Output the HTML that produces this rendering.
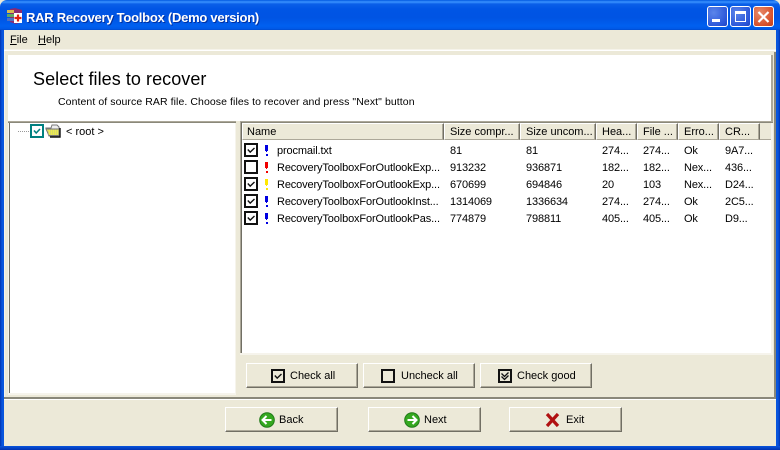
<!DOCTYPE html>
<html><head><meta charset="utf-8">
<style>
html,body{margin:0;padding:0;width:780px;height:450px;overflow:hidden;background:#ece9d8;}
*{box-sizing:border-box;}
body{font-family:"Liberation Sans",sans-serif;font-size:11px;color:#000;position:relative;}
.a{position:absolute;}
.t{position:absolute;white-space:nowrap;line-height:13px;margin-top:1px;}
.r{letter-spacing:-.13px;}
.btn{position:absolute;height:25px;width:113px;background:#ece9d8;border-top:1px solid #fff;border-left:1px solid #fff;border-right:1px solid #716f64;border-bottom:1px solid #716f64;box-shadow:inset -1px -1px 0 #aca899;}
.hd{position:absolute;top:123px;height:17px;background:#ece9d8;border-top:1px solid #fff;border-left:1px solid #fff;border-right:1px solid #716f64;border-bottom:1px solid #aca899;box-shadow:inset -1px 0 0 #aca899;line-height:16px;padding-left:5px;white-space:nowrap;overflow:hidden;}
.cb{position:absolute;left:244px;width:14px;height:14px;}
.ex{position:absolute;left:265px;width:3px;height:11px;}
</style></head>
<body>
<!-- title bar -->
<div class="a" style="left:0;top:0;width:780px;height:30px;border-radius:7px 7px 0 0;background:linear-gradient(180deg,#0058e0 0,#3a93ff 2px,#0a5fe8 4px,#0055e5 9px,#0054e3 18px,#0060f0 26px,#0058e6 29px,#0048c8 30px);"></div>
<div class="a" style="left:0;top:30px;width:4px;height:420px;background:linear-gradient(90deg,#0032b0,#0855dd 2px,#0855dd)"></div>
<div class="a" style="right:0;top:30px;width:4px;height:420px;background:linear-gradient(270deg,#0032b0,#0855dd 2px,#0855dd)"></div>
<div class="a" style="left:0;top:446px;width:780px;height:4px;background:linear-gradient(180deg,#0855dd,#0032b0)"></div>
<!-- app icon -->
<svg class="a" style="left:6px;top:7px" width="17" height="17" viewBox="0 0 17 17">
<path d="M4 2l5-1 7 2v12l-6 2-6-2z" fill="#8a2a70"/>
<rect x="1" y="3" width="7" height="3" fill="#d8b850"/>
<rect x="1" y="7" width="7" height="3" fill="#60a860"/>
<rect x="1" y="11" width="7" height="3" fill="#5070c0"/>
<rect x="8" y="6" width="8" height="10" fill="#fff"/>
<path d="M12 7.5v7M8.5 11h7" stroke="#e02010" stroke-width="2.2"/>
</svg>
<div class="t" style="margin:0;left:26px;top:10px;font-size:13px;font-weight:bold;color:#fff;letter-spacing:-.25px;line-height:16px;text-shadow:1px 1px 0 #0030a0;">RAR Recovery Toolbox (Demo version)</div>
<!-- window buttons -->
<div class="a" style="left:707px;top:6px;width:21px;height:21px;border:1px solid #fff;border-radius:3px;background:radial-gradient(circle at 30% 30%,#5b85ea,#2a55d8 75%,#1f45c0);"></div>
<div class="a" style="left:712px;top:19px;width:8px;height:3px;background:#fff"></div>
<div class="a" style="left:730px;top:6px;width:21px;height:21px;border:1px solid #fff;border-radius:3px;background:radial-gradient(circle at 30% 30%,#5b85ea,#2a55d8 75%,#1f45c0);"></div>
<div class="a" style="left:735px;top:11px;width:11px;height:11px;border:1px solid #fff;border-top:3px solid #fff;"></div>
<div class="a" style="left:753px;top:6px;width:21px;height:21px;border:1px solid #fff;border-radius:3px;background:radial-gradient(circle at 30% 30%,#e88a6a,#d8502a 70%,#c0401c);"></div>
<svg class="a" style="left:756px;top:9px" width="15" height="15"><path d="M2.5 3l10 10M12.5 3l-10 10" stroke="#fff" stroke-width="2.2"/></svg>
<!-- menu -->
<div class="t" style="left:10px;top:33px;"><u>F</u>ile</div>
<div class="t" style="left:38px;top:33px;"><u>H</u>elp</div>
<div class="a" style="left:4px;top:49px;width:772px;height:1px;background:#f5f3ea"></div>
<div class="a" style="left:4px;top:50px;width:772px;height:1px;background:#fff"></div>
<div class="a" style="left:774px;top:52px;width:2px;height:346px;background:#8a887a"></div>
<div class="a" style="left:4px;top:51px;width:1px;height:346px;background:#f5f3ea"></div>
<!-- header -->
<div class="a" style="left:8px;top:55px;width:765px;height:66px;background:#fff;border-right:2px solid #aca899;"></div>
<div class="t" style="margin:0;left:33px;top:69px;font-size:18px;line-height:20px;letter-spacing:.06px;">Select files to recover</div>
<div class="t" style="left:58px;top:95px;font-size:10.5px;letter-spacing:.08px;">Content of source RAR file. Choose files to recover and press "Next" button</div>
<div class="a" style="left:8px;top:121px;width:765px;height:1px;background:#aca899"></div>
<div class="a" style="left:8px;top:122px;width:765px;height:1px;background:#8a887a"></div>
<!-- tree panel -->
<div class="a" style="left:8px;top:123px;width:228px;height:272px;background:#fff;border-left:1px solid #f6f4ec;border-right:1px solid #f6f4ec;border-bottom:2px solid #f6f4ec;"></div>
<div class="a" style="left:9px;top:123px;width:1px;height:270px;background:#716f64"></div>
<div class="a" style="left:236px;top:121px;width:4px;height:2px;background:#ece9d8"></div>
<div class="a" style="left:18px;top:131px;width:12px;height:1px;background-image:linear-gradient(90deg,#999 1px,transparent 1px);background-size:2px 1px"></div>
<svg class="a" style="left:30px;top:124px" width="14" height="14"><rect x="1" y="1" width="12" height="12" fill="#fff" stroke="#008080" stroke-width="2"/><path d="M4 6.5l2.2 2.5L10 5" fill="none" stroke="#008080" stroke-width="1.6"/></svg>
<svg class="a" style="left:45px;top:122px" width="17" height="16"><path d="M1 6h5l1-3h5l2 2v9H4z" fill="#eee" stroke="#777"/><path d="M1 7h13v6.5H4z" fill="#eded50" stroke="#777"/><path d="M3 8h10M3 10h10M3 12h10" stroke="#c8c880" stroke-dasharray="1 1"/><path d="M15 6v9H5" fill="none" stroke="#111" stroke-width="1.4"/></svg>
<div class="t" style="left:66px;top:125px;">&lt; root &gt;</div>
<!-- list panel -->
<div class="a" style="left:240px;top:123px;width:533px;height:232px;background:#fff;border-right:2px solid #f6f4ec;border-bottom:2px solid #f6f4ec;"></div>
<div class="a" style="left:240px;top:121px;width:1px;height:232px;background:#aca899"></div>
<div class="a" style="left:241px;top:122px;width:1px;height:231px;background:#716f64"></div>
<div class="a" style="left:242px;top:123px;width:529px;height:17px;background:#ece9d8;border-bottom:1px solid #aca899"></div>
<div class="hd" style="left:242px;width:202px;padding-left:4px;">Name</div>
<div class="hd" style="left:444px;width:76px;">Size compr...</div>
<div class="hd" style="left:520px;width:76px;">Size uncom...</div>
<div class="hd" style="left:596px;width:41px;">Hea...</div>
<div class="hd" style="left:637px;width:41px;">File ...</div>
<div class="hd" style="left:678px;width:41px;">Erro...</div>
<div class="hd" style="left:719px;width:41px;">CR...</div>
<!-- rows -->
<svg class="cb" style="top:143px" viewBox="0 0 14 14"><rect x="1" y="1" width="12" height="12" fill="#fff" stroke="#111" stroke-width="2"/><path d="M3.8 6.5l2.4 2.6L10.5 5" fill="none" stroke="#111" stroke-width="1.4"/></svg>
<svg class="ex" style="top:145px" viewBox="0 0 3 11"><path d="M0 0h3v6H2v1H1V6H0zM1 9h2v2H1z" fill="#0000e0"/></svg>
<div class="t r" style="left:277px;top:144px;">procmail.txt</div>
<div class="t r" style="left:450px;top:144px;">81</div><div class="t r" style="left:526px;top:144px;">81</div><div class="t r" style="left:602px;top:144px;">274...</div><div class="t r" style="left:643px;top:144px;">274...</div><div class="t r" style="left:684px;top:144px;">Ok</div><div class="t r" style="left:725px;top:144px;">9A7...</div>

<svg class="cb" style="top:160px" viewBox="0 0 14 14"><rect x="1" y="1" width="12" height="12" fill="#fff" stroke="#111" stroke-width="2"/></svg>
<svg class="ex" style="top:162px" viewBox="0 0 3 11"><path d="M0 0h3v6H2v1H1V6H0zM1 9h2v2H1z" fill="#f00000"/></svg>
<div class="t r" style="left:277px;top:161px;">RecoveryToolboxForOutlookExp...</div>
<div class="t r" style="left:450px;top:161px;">913232</div><div class="t r" style="left:526px;top:161px;">936871</div><div class="t r" style="left:602px;top:161px;">182...</div><div class="t r" style="left:643px;top:161px;">182...</div><div class="t r" style="left:684px;top:161px;">Nex...</div><div class="t r" style="left:725px;top:161px;">436...</div>

<svg class="cb" style="top:177px" viewBox="0 0 14 14"><rect x="1" y="1" width="12" height="12" fill="#fff" stroke="#111" stroke-width="2"/><path d="M3.8 6.5l2.4 2.6L10.5 5" fill="none" stroke="#111" stroke-width="1.4"/></svg>
<svg class="ex" style="top:179px" viewBox="0 0 3 11"><path d="M0 0h3v6H2v1H1V6H0zM1 9h2v2H1z" fill="#ffe800"/></svg>
<div class="t r" style="left:277px;top:178px;">RecoveryToolboxForOutlookExp...</div>
<div class="t r" style="left:450px;top:178px;">670699</div><div class="t r" style="left:526px;top:178px;">694846</div><div class="t r" style="left:602px;top:178px;">20</div><div class="t r" style="left:643px;top:178px;">103</div><div class="t r" style="left:684px;top:178px;">Nex...</div><div class="t r" style="left:725px;top:178px;">D24...</div>

<svg class="cb" style="top:194px" viewBox="0 0 14 14"><rect x="1" y="1" width="12" height="12" fill="#fff" stroke="#111" stroke-width="2"/><path d="M3.8 6.5l2.4 2.6L10.5 5" fill="none" stroke="#111" stroke-width="1.4"/></svg>
<svg class="ex" style="top:196px" viewBox="0 0 3 11"><path d="M0 0h3v6H2v1H1V6H0zM1 9h2v2H1z" fill="#0000e0"/></svg>
<div class="t r" style="left:277px;top:195px;">RecoveryToolboxForOutlookInst...</div>
<div class="t r" style="left:450px;top:195px;">1314069</div><div class="t r" style="left:526px;top:195px;">1336634</div><div class="t r" style="left:602px;top:195px;">274...</div><div class="t r" style="left:643px;top:195px;">274...</div><div class="t r" style="left:684px;top:195px;">Ok</div><div class="t r" style="left:725px;top:195px;">2C5...</div>

<svg class="cb" style="top:211px" viewBox="0 0 14 14"><rect x="1" y="1" width="12" height="12" fill="#fff" stroke="#111" stroke-width="2"/><path d="M3.8 6.5l2.4 2.6L10.5 5" fill="none" stroke="#111" stroke-width="1.4"/></svg>
<svg class="ex" style="top:213px" viewBox="0 0 3 11"><path d="M0 0h3v6H2v1H1V6H0zM1 9h2v2H1z" fill="#0000e0"/></svg>
<div class="t r" style="left:277px;top:212px;">RecoveryToolboxForOutlookPas...</div>
<div class="t r" style="left:450px;top:212px;">774879</div><div class="t r" style="left:526px;top:212px;">798811</div><div class="t r" style="left:602px;top:212px;">405...</div><div class="t r" style="left:643px;top:212px;">405...</div><div class="t r" style="left:684px;top:212px;">Ok</div><div class="t r" style="left:725px;top:212px;">D9...</div>

<!-- action buttons -->
<div class="btn" style="left:246px;top:363px;width:112px;"></div>
<svg class="a" style="left:271px;top:369px" width="14" height="14"><rect x="1" y="1" width="12" height="12" fill="none" stroke="#111" stroke-width="2"/><path d="M3.8 6.5l2.4 2.6L10.5 5" fill="none" stroke="#111" stroke-width="1.4"/></svg>
<div class="t" style="left:290px;top:369px;">Check all</div>
<div class="btn" style="left:363px;top:363px;width:112px;"></div>
<svg class="a" style="left:381px;top:369px" width="14" height="14"><rect x="1" y="1" width="12" height="12" fill="none" stroke="#111" stroke-width="2"/></svg>
<div class="t" style="left:401px;top:369px;">Uncheck all</div>
<div class="btn" style="left:480px;top:363px;width:112px;"></div>
<svg class="a" style="left:498px;top:369px" width="14" height="14"><rect x="1" y="1" width="12" height="12" fill="none" stroke="#111" stroke-width="2"/><path d="M3.5 4.5l3 3 4-4M3.5 7.5l3 3 4-4" fill="none" stroke="#111" stroke-width="1.3"/></svg>
<div class="t" style="left:517px;top:369px;">Check good</div>
<!-- separator -->
<div class="a" style="left:4px;top:397px;width:772px;height:2px;background:#8a887a"></div>
<div class="a" style="left:4px;top:399px;width:772px;height:1px;background:#fff"></div>
<!-- nav buttons -->
<div class="btn" style="left:225px;top:407px;"></div>
<svg class="a" style="left:259px;top:412px" width="16" height="16"><circle cx="8" cy="8" r="7.3" fill="#35a820" stroke="#1f7a18"/><path d="M3.5 8h9M7.5 4L3.5 8l4 4" fill="none" stroke="#fff" stroke-width="2"/></svg>
<div class="t" style="left:279px;top:413px;">Back</div>
<div class="btn" style="left:368px;top:407px;"></div>
<svg class="a" style="left:404px;top:412px" width="16" height="16"><circle cx="8" cy="8" r="7.3" fill="#35a820" stroke="#1f7a18"/><path d="M3.5 8h9M8.5 4l4 4-4 4" fill="none" stroke="#fff" stroke-width="2"/></svg>
<div class="t" style="left:424px;top:413px;">Next</div>
<div class="btn" style="left:509px;top:407px;"></div>
<svg class="a" style="left:545px;top:412px" width="15" height="16"><path d="M2 2l11 12M13 2L2 14" stroke="#b01010" stroke-width="3.2"/></svg>
<div class="t" style="left:566px;top:413px;">Exit</div>
</body></html>
